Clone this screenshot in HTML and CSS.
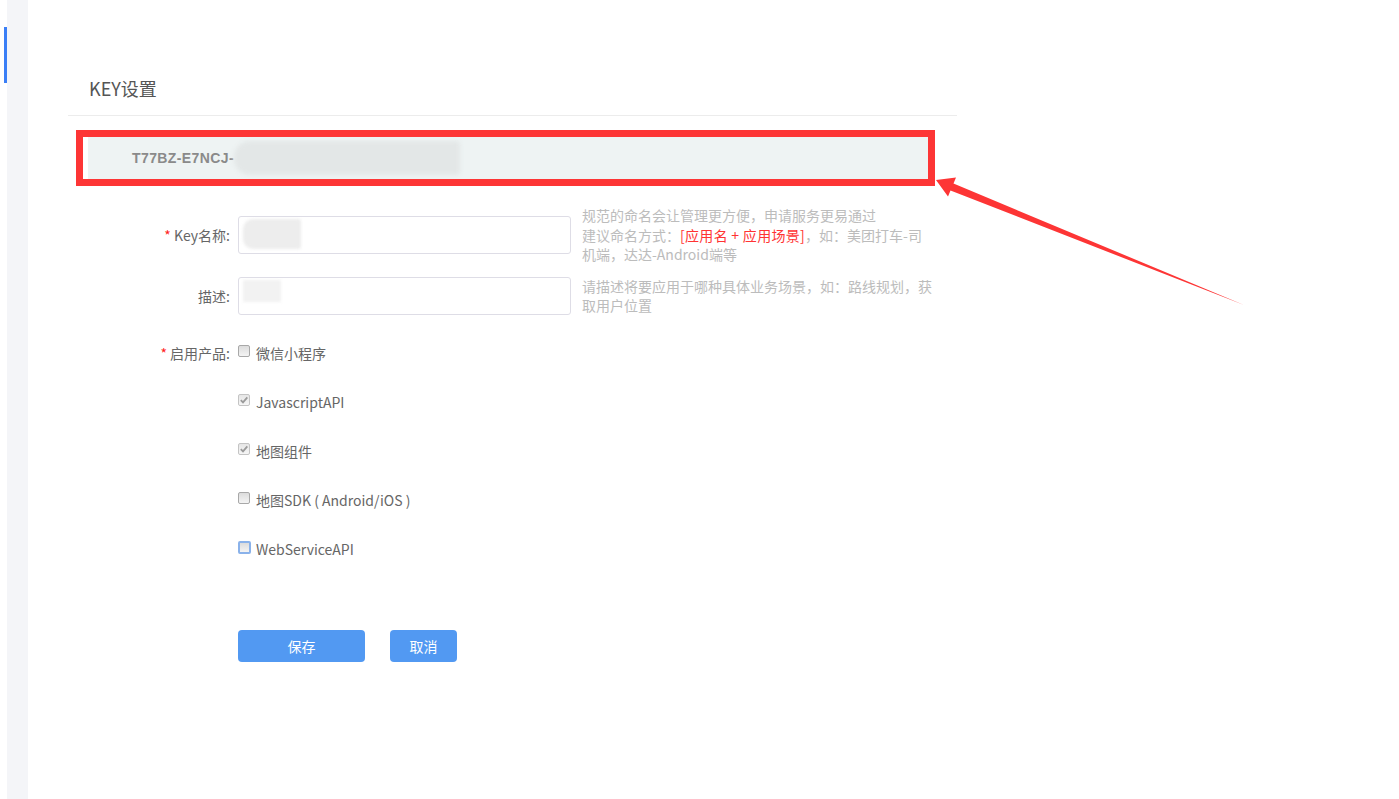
FILE: index.html
```html
<!DOCTYPE html>
<html lang="zh-CN">
<head>
  <meta charset="UTF-8">
  <title>KEY设置</title>
  <link rel="stylesheet" href="styles.css">
</head>
<body>
  <div class="page">
    <div class="rail">
      <div class="marker"></div>
      <div class="side"></div>
    </div>

    <div class="main">
      <div class="title">KEY设置</div>

      <div class="key-box">
        <div class="key-inner">
          <span class="key-text">T77BZ-E7NCJ-</span>
          <span class="key-blur"></span>
        </div>
      </div>

      <div class="form">
        <div class="row">
          <div class="label"><span class="req">*</span> Key名称:</div>
          <div class="input"><span class="smudge smudge-a"></span></div>
          <div class="hint">规范的命名会让管理更方便，申请服务更易通过<br>建议命名方式：<span class="red">[应用名&nbsp;+&nbsp;应用场景]</span>，如：美团打车-司<br>机端，达达-Android端等</div>
        </div>

        <div class="row row-2">
          <div class="label">描述:</div>
          <div class="input"><span class="smudge smudge-b"></span></div>
          <div class="hint">请描述将要应用于哪种具体业务场景，如：路线规划，获取用户位置</div>
        </div>

        <div class="row row-products">
          <div class="label label-top"><span class="req">*</span> 启用产品:</div>
          <div class="products">
            <div class="product"><span class="box"></span>微信小程序</div>
            <div class="product"><span class="box checked"><svg viewBox="0 0 12 12" width="12" height="12"><path d="M2.8 6.2 L5 8.4 L9.3 3.4" fill="none" stroke="#9a9a9a" stroke-width="1.8"/></svg></span>JavascriptAPI</div>
            <div class="product"><span class="box checked"><svg viewBox="0 0 12 12" width="12" height="12"><path d="M2.8 6.2 L5 8.4 L9.3 3.4" fill="none" stroke="#9a9a9a" stroke-width="1.8"/></svg></span>地图组件</div>
            <div class="product"><span class="box"></span>地图SDK ( Android/iOS )</div>
            <div class="product"><span class="box focus"></span>WebServiceAPI</div>
          </div>
        </div>

        <div class="actions">
          <button class="btn btn-save">保存</button>
          <button class="btn btn-cancel">取消</button>
        </div>
      </div>
    </div>
  </div>

  <!-- annotation arrow drawn over the page -->
  <svg class="arrow" width="1399" height="799" viewBox="0 0 1399 799">
    <polygon points="936,180 956,177.5 953.5,183.5 1244,305 950.5,190.5 948,196.5" fill="#fd3535"/>
  </svg>
</body>
</html>
```

FILE: styles.css
```css
body {
  margin: 0;
  background-color: #ffffff;
  font-family: "Noto Sans CJK SC", "Noto Sans", sans-serif;
  font-size: 14px;
  color: #666666;
}
.page {
  display: flex;
  min-height: 799px;
}
.rail {
  display: flex;
  align-items: flex-start;
  padding-left: 4px;
}
.marker {
  width: 3px;
  height: 56px;
  margin-top: 27px;
  background-color: #3b7ff6;
}
.side {
  width: 21px;
  height: 799px;
  background-color: #f4f5f8;
}
.main {
  width: 889px;
  margin-left: 40px;
}
.title {
  padding: 76px 0 15px 21px;
  font-size: 18px;
  line-height: 24px;
  color: #555555;
  border-bottom: 1px solid #ececec;
}
.key-box {
  margin: 14px 22px 0 8px;
  height: 42px;
  border: 7px solid #fd3535;
}
.key-inner {
  display: flex;
  align-items: center;
  height: 42px;
  margin-left: 5px;
  padding-left: 44px;
  background-color: #eef3f3;
}
.key-text {
  font-family: "Liberation Sans", Arial, sans-serif;
  font-weight: bold;
  font-size: 14px;
  letter-spacing: 0.4px;
  color: #8a8a8a;
}
.key-blur {
  width: 226px;
  height: 34px;
  background-color: #e3e7e7;
  border-radius: 16px 4px 4px 16px;
  filter: blur(2px);
}
.form {
  margin-top: 20px;
}
.row {
  display: flex;
  align-items: center;
}
.row-2 {
  margin-top: 12px;
}
.label {
  width: 162px;
  text-align: right;
  color: #666666;
  line-height: 20px;
}
.req {
  color: #ff2222;
}
.input {
  position: relative;
  box-sizing: border-box;
  width: 333px;
  height: 38px;
  margin-left: 8px;
  border: 1px solid #dedde6;
  border-radius: 3px;
  overflow: hidden;
}
.smudge {
  position: absolute;
  background-color: #ededed;
  filter: blur(1.5px);
}
.smudge-a {
  left: 4px;
  top: 2px;
  width: 58px;
  height: 30px;
  border-radius: 10px 2px 2px 10px;
}
.smudge-b {
  left: 4px;
  top: 2px;
  width: 38px;
  height: 22px;
  background-color: #f2f2f2;
}
.hint {
  width: 360px;
  margin-left: 11px;
  line-height: 19.5px;
  color: #bcbcbc;
}
.red {
  color: #ff3333;
  letter-spacing: 0.3px;
}
.row-products {
  align-items: flex-start;
  margin-top: 13px;
}
.label-top {
  line-height: 49px;
}
.products {
  margin-left: 8px;
}
.product {
  display: flex;
  align-items: center;
  height: 49px;
  color: #666666;
}
.box {
  display: inline-flex;
  box-sizing: border-box;
  width: 12px;
  height: 12px;
  margin-right: 6px;
  margin-top: -4px;
  border: 1px solid #a8a8a8;
  border-radius: 2px;
  background: linear-gradient(#dcdcdc, #f4f4f4);
}
.box svg {
  margin: -1px;
}
.box.checked {
  border-color: #c4c4c4;
  background: linear-gradient(#e6e6e6, #f6f6f6);
}
.box.focus {
  border: 2px solid #8ab2ea;
  width: 13px;
  height: 13px;
  margin-right: 5px;
}
.actions {
  display: flex;
  gap: 25px;
  margin: 56px 0 0 170px;
}
.btn {
  height: 32px;
  border: none;
  border-radius: 4px;
  background-color: #5299f2;
  color: #ffffff;
  font-family: "Noto Sans CJK SC", sans-serif;
  font-size: 14px;
  cursor: pointer;
}
.btn-save {
  width: 127px;
}
.btn-cancel {
  width: 67px;
}
.arrow {
  position: absolute;
  left: 0;
  top: 0;
  pointer-events: none;
}
```
